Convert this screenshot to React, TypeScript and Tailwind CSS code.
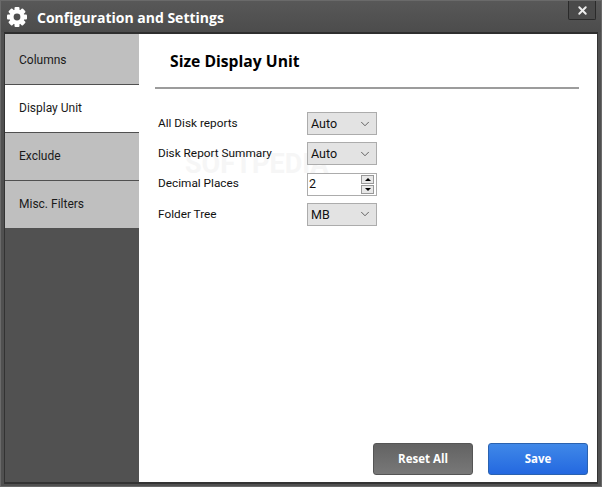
import React from "react";
import { ChevronDown, X } from "lucide-react";

const tabs = [
  { name: "Columns", cls: "h-[51px] pt-[2px]" },
  { name: "Display Unit", cls: "h-[48px] pb-[2px]", active: true },
  { name: "Exclude", cls: "h-[48px] pb-[2px]" },
  { name: "Misc. Filters", cls: "h-[48px] pb-[2px]" },
];

function Gear() {
  const teeth = [0, 45, 90, 135];
  return (
    <svg width="22" height="22" viewBox="0 0 22 22" className="shrink-0">
      {teeth.map((a) => (
        <rect key={a} x="8.5" y="1" width="5" height="20" rx="1" fill="#fff" transform={`rotate(${a} 11 11)`} />
      ))}
      <circle cx="11" cy="11" r="7.5" fill="#fff" />
      <circle cx="11" cy="11" r="3.4" fill="#505050" />
    </svg>
  );
}

function Select({ value }: { value: string }) {
  return (
    <div className="relative flex h-[23px] w-[70px] items-center justify-between border border-[#acacac] bg-[#e3e3e3] pl-[3px] pr-[4px] text-[12.5px] text-[#111]">
      <span className="pt-[2px]">{value}</span>
      <ChevronDown size={14} strokeWidth={1.25} className="text-[#333]" />
    </div>
  );
}

function Spinner({ value }: { value: string }) {
  return (
    <div className="relative flex h-[23px] w-[70px] items-center justify-between border border-[#acacac] bg-white pl-[1px] pr-[2px] text-[12.5px] text-[#111]">
      <span>{value}</span>
      <div className="flex flex-col gap-[1px]">
        <div className="flex h-[9px] w-[13px] items-center justify-center border border-[#999] bg-[#e8e8e8]">
          <div className="h-0 w-0 border-x-[3px] border-b-[3px] border-x-transparent border-b-black" />
        </div>
        <div className="flex h-[9px] w-[13px] items-center justify-center border border-[#999] bg-[#e8e8e8]">
          <div className="h-0 w-0 border-x-[3px] border-t-[3px] border-x-transparent border-t-black" />
        </div>
      </div>
    </div>
  );
}

function Row({ label, children }: { label: string; children: React.ReactNode }) {
  return (
    <div className="flex items-center">
      <div className="relative w-[149px] text-[11.8px] text-[#111]">{label}</div>
      {children}
    </div>
  );
}

export default function App() {
  return (
    <div className="flex h-[487px] w-[602px] flex-col overflow-hidden border border-[#6a6a6a] bg-[#505050] font-['Roboto','Liberation_Sans',sans-serif]">
      {/* Title bar */}
      <div className="flex h-[31px] shrink-0 items-start bg-gradient-to-b from-[#585858] to-[#4c4c4c] pl-[5px] font-['Open_Sans','Liberation_Sans',sans-serif]">
        <div className="mt-[5px]">
          <Gear />
        </div>
        <div className="ml-[9px] mt-[6px] text-[14px] font-bold leading-[22px] text-white">
          Configuration and Settings
        </div>
        <div className="ml-auto mr-[5px] flex h-[19px] w-[28px] items-center justify-center rounded-b-[2px] border border-t-0 border-[#2a2a2a] bg-[#4a4a4a]">
          <X size={13} strokeWidth={3.5} className="text-[#eee]" />
        </div>
      </div>

      {/* Body */}
      <div className="mx-[3px] flex h-[452px] shrink-0 border border-b-2 border-[#333] border-t-2 border-t-[#2e2e2e]">
        <div className="w-[134px] shrink-0 bg-[#515151]">
          {tabs.map((t) => (
            <div
              key={t.name}
              className={`${t.cls} flex items-center border-b border-[#505050] pl-[14px] text-[12px] text-[#1a1a1a] ${
                t.active ? "bg-white" : "bg-[#bfbfbf]"
              }`}
            >
              {t.name}
            </div>
          ))}
        </div>

        <div className="relative flex min-w-0 flex-1 flex-col bg-white">
          {/* Watermark */}
          <div className="pointer-events-none absolute left-[46px] top-[114px] text-[27px] font-bold leading-[32px] text-[#f6f6f6]">
            SOFTPEDIA
          </div>

          <div className="relative ml-[16px] mr-[18px] h-[55px] shrink-0 border-b-2 border-[#9c9c9c] pl-[15px] pt-[15px] font-['Open_Sans','Liberation_Sans',sans-serif] text-[15.7px] font-bold leading-[24px] text-black">
            Size Display Unit
          </div>

          <div className="ml-[19px] mt-[23px] flex flex-col gap-[7.3px]">
            <Row label="All Disk reports">
              <Select value="Auto" />
            </Row>
            <Row label="Disk Report Summary">
              <Select value="Auto" />
            </Row>
            <Row label="Decimal Places">
              <Spinner value="2" />
            </Row>
            <Row label="Folder Tree">
              <Select value="MB" />
            </Row>
          </div>

          <div className="mb-[7px] mr-[9px] mt-auto flex justify-end gap-[15px] font-['Open_Sans','Liberation_Sans',sans-serif]">
            <div className="flex h-[32px] w-[100px] items-center justify-center rounded-[3px] border border-[#555] bg-gradient-to-b from-[#636363] to-[#787878] text-[11.5px] font-bold text-white">
              Reset All
            </div>
            <div className="flex h-[32px] w-[100px] items-center justify-center rounded-[3px] border border-[#2a62b0] bg-gradient-to-b from-[#4088e8] to-[#2468e0] text-[11.5px] font-bold text-white">
              Save
            </div>
          </div>
        </div>
      </div>
    </div>
  );
}
